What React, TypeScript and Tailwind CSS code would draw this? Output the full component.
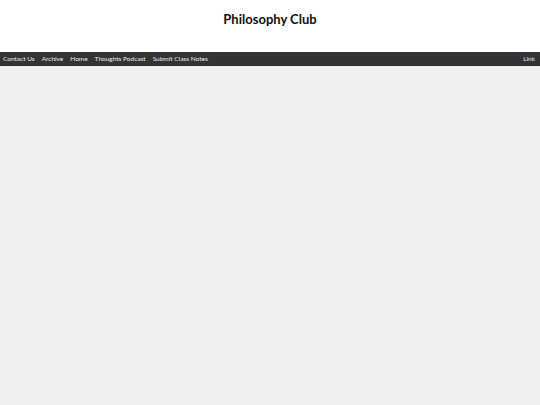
export default function App() {
  return (
    <div className="min-h-[405px] bg-[#f0f0f0] font-['Lato',sans-serif]">
      <header className="bg-white h-[52px] flex items-start justify-center pt-[10px]">
        <h1 className="text-[13px] leading-[18px] font-bold text-[#111]">Philosophy Club</h1>
      </header>
      <nav className="bg-[#333333] h-[14px] flex items-center justify-between px-[3px] text-[6.5px] leading-[14px] text-[#eeeeee] border-b border-[#2a2a2a]">
        <div className="flex gap-[7px] pt-[1px]">
          <a>Contact Us</a>
          <a>Archive</a>
          <a>Home</a>
          <a>Thoughts Podcast</a>
          <a>Submit Class Notes</a>
        </div>
        <a className="pr-[2px] pt-[1px]">Link</a>
      </nav>
    </div>
  );
}
